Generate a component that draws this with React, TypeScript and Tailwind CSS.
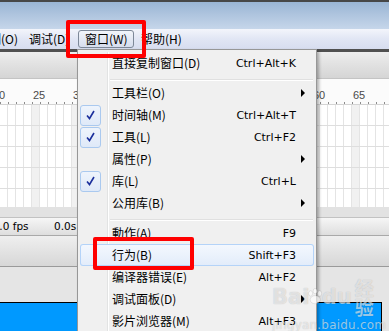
import React from 'react';

type MenuItem =
  | { label: string; shortcut?: string; checked?: boolean; sub?: boolean; active?: boolean }
  | 'sep';

const items: MenuItem[] = [
  { label: '直接复制窗口(D)', shortcut: 'Ctrl+Alt+K' },
  'sep',
  { label: '工具栏(O)', sub: true },
  { label: '时间轴(M)', shortcut: 'Ctrl+Alt+T', checked: true },
  { label: '工具(L)', shortcut: 'Ctrl+F2', checked: true },
  { label: '属性(P)', sub: true },
  { label: '库(L)', shortcut: 'Ctrl+L', checked: true },
  { label: '公用库(B)', sub: true },
  'sep',
  { label: '動作(A)', shortcut: 'F9' },
  { label: '行为(B)', shortcut: 'Shift+F3', active: true },
  { label: '编译器错误(E)', shortcut: 'Alt+F2' },
  { label: '调试面板(D)', sub: true },
  { label: '影片浏览器(M)', shortcut: 'Alt+F3' },
];

const frames = Array.from({ length: 49 }, (_, i) => i);
const labels = [20, 25, 30, 35, 40, 45, 50, 55, 60, 65];

const Timeline = () => (
  <svg width="389" height="128" className="block shrink-0">
    <rect x="0" y="0" width="389" height="26" fill="#fbfbfb" />
    {labels.map((n) => (
      <text key={n} x={8 * n - 167} y="20" fontFamily="Liberation Sans, sans-serif" fontSize="11" fill="#4a4a4a">
        {n}
      </text>
    ))}
    {frames.map((k) => (
      <line key={'t' + k} x1={8 * k + 0.5} x2={8 * k + 0.5} y1="23" y2="26" stroke="#8c8c8c" />
    ))}
    <line x1="0" x2="389" y1="25.5" y2="25.5" stroke="#d4d4d4" />
    <rect x="0" y="26" width="389" height="102" fill="#ffffff" />
    {[25, 30, 35, 40, 45, 50, 55, 60, 65].map((n) => (
      <rect key={'s' + n} x={8 * n - 168} y="26" width="8" height="102" fill="#f1f1f1" />
    ))}
    {frames.map((k) => (
      <line key={'v' + k} x1={8 * k + 7.5} x2={8 * k + 7.5} y1="26" y2="128" stroke="#e4e4e4" />
    ))}
    {[46, 67, 88, 109].map((y) => (
      <line key={'h' + y} x1="0" x2="389" y1={y + 0.5} y2={y + 0.5} stroke="#dedede" />
    ))}
  </svg>
);

const Check = () => (
  <div className="flex h-[21px] w-[21px] items-center justify-center rounded-[3px] border border-[#aac9ef] bg-gradient-to-b from-[#eef4fc] to-[#dfe9f8]">
    <svg width="19" height="19" viewBox="0 0 19 19">
      <path d="M6 9.5 L8.5 12.5 L13 5" fill="none" stroke="#1b2f9c" strokeWidth="1.6" />
    </svg>
  </div>
);

const Arrow = () => (
  <div className="h-0 w-0 border-y-[4px] border-l-[4px] border-y-transparent border-l-black" />
);

const WindowMenu = () => (
  <div className="absolute left-[77px] top-[49px] w-[240px] border border-[#979797] bg-[#f0f0f0] p-[2px] shadow-[2px_2px_3px_rgba(0,0,0,0.3)]">
    {items.map((it, i) => {
      if (it === 'sep') {
        return (
          <div key={i} className="flex h-[8px]">
            <div className="w-[28px] shrink-0 border-r border-[#e2e3e3] shadow-[1px_0_0_#ffffff]" />
            <div className="ml-[2px] mr-[1px] mt-[5px] h-[2px] flex-1 border-t border-b border-[#e0e0e0] border-b-white" />
          </div>
        );
      }
      return (
        <div
          key={i}
          className={
            it.active
              ? 'flex h-[22px] items-center rounded-[3px] bg-gradient-to-b from-[#f4f8fe] to-[#e2ecfa] shadow-[inset_0_0_0_1px_#b4d3f8]'
              : 'flex h-[22px] items-center'
          }
        >
          <div
            className={
              it.active
                ? 'flex h-full w-[28px] shrink-0 items-center border-r border-transparent'
                : 'flex h-full w-[28px] shrink-0 items-center border-r border-[#e2e3e3] shadow-[1px_0_0_#ffffff]'
            }
          >
            {it.checked && <Check />}
          </div>
          <span className="flex-1 pl-[4px] font-['Noto_Sans_CJK_SC',sans-serif] text-[12px] leading-none text-black">
            {it.label}
          </span>
          {it.shortcut && (
            <span className="font-['DejaVu_Sans',sans-serif] text-[11px] leading-none text-black">{it.shortcut}</span>
          )}
          <div className="flex w-[18px] shrink-0 pl-[5px]">{it.sub && <Arrow />}</div>
        </div>
      );
    })}
  </div>
);

const Watermark = () => (
  <div className="pointer-events-none absolute left-[272px] top-[278px] flex flex-col items-start text-white/60 [text-shadow:0_0_1px_rgba(0,0,0,0.25)]">
    <div className="flex items-center font-['DejaVu_Sans',sans-serif] text-[21px] font-bold leading-none">
      <span>Bai</span>
      <svg width="18" height="20" viewBox="0 0 18 20" className="-mx-[2px]">
        <g fill="rgba(255,255,255,0.6)" stroke="rgba(0,0,0,0.15)" strokeWidth="0.6">
          <ellipse cx="4" cy="6" rx="2.2" ry="3" />
          <ellipse cx="9" cy="3.5" rx="2.2" ry="3" />
          <ellipse cx="14" cy="6" rx="2.2" ry="3" />
          <ellipse cx="9" cy="13" rx="5.5" ry="4.5" />
        </g>
      </svg>
      <span>du</span>
      <span className="ml-[3px] font-['Noto_Sans_CJK_SC',sans-serif] text-[19px]">经验</span>
    </div>
    <div className="mt-[3px] font-['DejaVu_Sans',sans-serif] text-[12px] leading-none tracking-[0.2px]">jingyan.baidu.com</div>
  </div>
);

export default function App() {
  return (
    <div className="relative h-[331px] w-[389px] overflow-hidden bg-[#e5e5e5]">
      <div className="flex h-full flex-col">
        <div className="h-[2px] shrink-0 bg-[#474747]" />
        <div className="h-[27px] shrink-0 bg-gradient-to-b from-[#9ab5d4] to-[#c6d6ea]" />
        <div className="flex h-[20px] shrink-0 items-center whitespace-nowrap bg-gradient-to-b from-[#f3f5fb] via-[#e1e6f4] to-[#d7ddef] font-['Noto_Sans_CJK_SC',sans-serif] text-[12px] leading-none text-black">
          <span className="-ml-[23px] w-[52px] shrink-0">控制(O)</span>
          <span className="w-[49px] shrink-0">调试(D)</span>
          <span className="flex h-[18px] w-[56px] shrink-0 items-center rounded-[3px] border border-[#7d8898] bg-gradient-to-b from-[#f2f5fa] to-[#d6dded] pl-[6px]">
            窗口(W)
          </span>
          <span className="ml-[7px]">帮助(H)</span>
        </div>
        <div className="h-[3px] shrink-0 bg-[#505050]" />
        <div className="h-[27px] shrink-0 border-b border-[#c4c4c4] bg-gradient-to-b from-[#ededed] to-[#d5d5d5]" />
        <Timeline />
        <div className="h-[11px] shrink-0 border-b border-[#c2c2c2] bg-[#e2e2e2]" />
        <div className="flex h-[18px] shrink-0 items-center whitespace-nowrap border-b border-[#a9a9a9] bg-gradient-to-b from-[#f6f6f6] to-[#dedede] font-['DejaVu_Sans',sans-serif] text-[10.5px] leading-none text-black">
          <span className="-ml-[14px] w-[68px] shrink-0">12.0 fps</span>
          <span>0.0s</span>
        </div>
        <div className="h-[31px] shrink-0 border-b border-[#9a9a9a] bg-gradient-to-b from-[#efefef] to-[#d7d7d7]" />
        <div className="h-[35px] shrink-0 bg-[#e5e5e5]" />
        <div className="flex h-[29px] shrink-0">
          <div className="w-[382px] shrink-0 border-r border-t border-black bg-[#0099ff]" />
          <div className="flex-1 bg-[#e5e5e5]" />
        </div>
      </div>

      <WindowMenu />

      <div className="pointer-events-none absolute left-[66px] top-[20px] h-[38px] w-[80px] rounded-[2px] border-4 border-[#ff0000]" />
      <div className="pointer-events-none absolute left-[93px] top-[237px] h-[33px] w-[101px] rounded-[2px] border-4 border-[#ff0000]" />

      <Watermark />
    </div>
  );
}
